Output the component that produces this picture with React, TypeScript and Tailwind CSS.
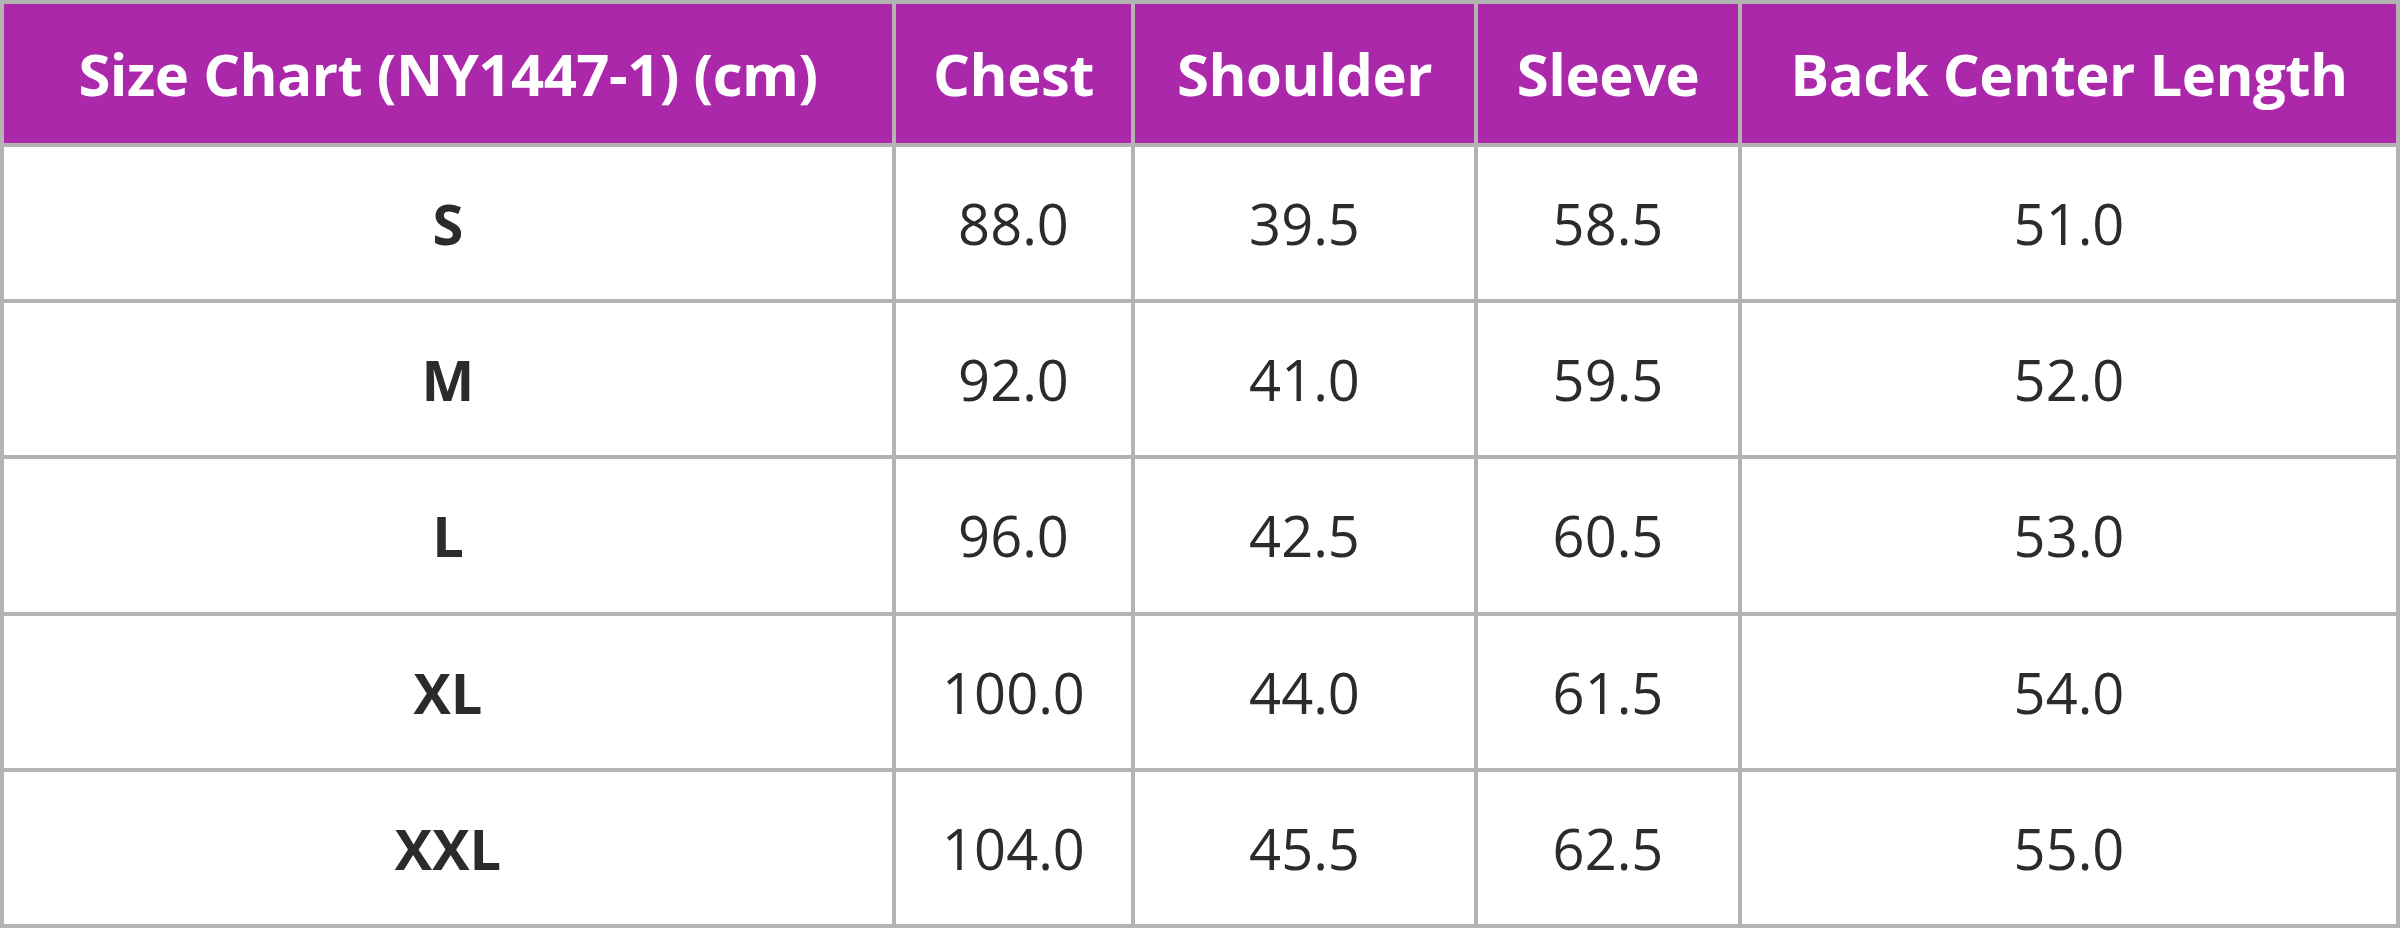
const HEADERS = ["Size Chart (NY1447-1) (cm)", "Chest", "Shoulder", "Sleeve", "Back Center Length"];

const ROWS = [
  ["S", "88.0", "39.5", "58.5", "51.0"],
  ["M", "92.0", "41.0", "59.5", "52.0"],
  ["L", "96.0", "42.5", "60.5", "53.0"],
  ["XL", "100.0", "44.0", "61.5", "54.0"],
  ["XXL", "104.0", "45.5", "62.5", "55.0"],
];

export default function App() {
  return (
    <div className="w-[2400px] h-[928px] bg-white font-['Open_Sans','Noto_Sans',sans-serif]">
      <table className="w-full h-full table-fixed border-collapse border-[4px] border-[#b3b3b3]">
        <colgroup>
          <col className="w-[892px]" />
          <col className="w-[239px]" />
          <col className="w-[343px]" />
          <col className="w-[264px]" />
          <col />
        </colgroup>
        <thead>
          <tr className="h-[143px] bg-[#ab28ab]">
            {HEADERS.map(h => (
              <th key={h} className="border-[4px] border-[#b3b3b3] text-center text-white text-[58px] font-bold tracking-[-0.5px] whitespace-nowrap">{h}</th>
            ))}
          </tr>
        </thead>
        <tbody>
          {ROWS.map(row => (
            <tr key={row[0]} className="h-[156px]">
              {row.map((cell, i) => (
                <td key={i} className={`border-[4px] border-[#b3b3b3] text-center text-[#2b2b2b] text-[56px] ${i === 0 ? "font-bold" : "font-normal"}`}>{cell}</td>
              ))}
            </tr>
          ))}
        </tbody>
      </table>
    </div>
  );
}
